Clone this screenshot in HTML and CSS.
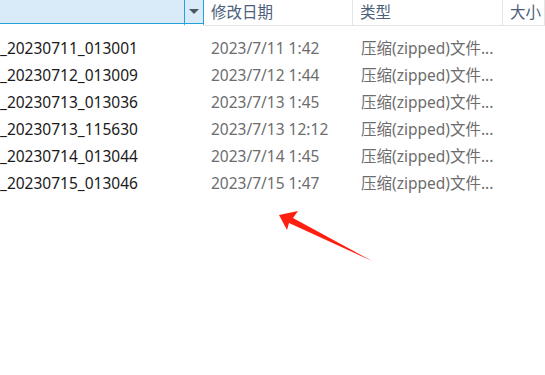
FILE: index.html
```html
<!DOCTYPE html>
<html lang="zh">
  <head>
    <meta charset="UTF-8" />
    <title>文件列表</title>
    <link rel="stylesheet" href="styles.css">
  </head>
  <body>
    <div class="explorer">
      <div class="header">
        <div class="col-name active"></div>
        <div class="col-drop active"><span class="caret"></span></div>
        <div class="col-date">修改日期</div>
        <div class="col-type">类型</div>
        <div class="col-size">大小</div>
      </div>
      <ul class="rows">
        <li class="row"><span class="name">_20230711_013001</span><span class="date">2023/7/11 1:42</span><span class="type">压缩(zipped)文件...</span></li>
        <li class="row"><span class="name">_20230712_013009</span><span class="date">2023/7/12 1:44</span><span class="type">压缩(zipped)文件...</span></li>
        <li class="row"><span class="name">_20230713_013036</span><span class="date">2023/7/13 1:45</span><span class="type">压缩(zipped)文件...</span></li>
        <li class="row"><span class="name">_20230713_115630</span><span class="date">2023/7/13 12:12</span><span class="type">压缩(zipped)文件...</span></li>
        <li class="row"><span class="name">_20230714_013044</span><span class="date">2023/7/14 1:45</span><span class="type">压缩(zipped)文件...</span></li>
        <li class="row"><span class="name">_20230715_013046</span><span class="date">2023/7/15 1:47</span><span class="type">压缩(zipped)文件...</span></li>
      </ul>
      <!-- 红色标注箭头 -->
      <svg class="arrow" width="545" height="375" viewBox="0 0 545 375">
        <polygon points="279,215 298,211 293,218 372,261 289,223 287,230" fill="#ff1f10" />
      </svg>
    </div>
  </body>
</html>
```

FILE: styles.css
```css
body {
  margin: 0;
  padding: 0;
  background: #fff;
  font-family: "Noto Sans", "Noto Sans CJK SC", sans-serif;
  font-size: 15.5px;
}
.explorer {
  position: relative;
  width: 545px;
  height: 375px;
  overflow: hidden;
}
.header {
  display: flex;
  height: 26px;
  color: #4c607a;
}
.header > div {
  box-sizing: border-box;
  height: 26px;
  line-height: 24px;
  padding-left: 7px;
  border-bottom: 1px solid #e5e5e5;
  border-right: 1px solid #e5e5e5;
  white-space: nowrap;
}
.header > div.active {
  background: #d9ebf9;
  border-right: 1px solid #26a0da;
  border-bottom: 2px solid #fff;
  box-shadow: inset 0 -1px 0 #26a0da;
  padding: 0;
}
.col-name {
  width: 185px;
}
.col-drop {
  width: 19px;
  display: flex;
  align-items: center;
  justify-content: center;
}
.caret {
  width: 0;
  height: 0;
  border-left: 5px solid transparent;
  border-right: 5px solid transparent;
  border-top: 5px solid #4d5560;
  margin-top: -2px;
}
.col-date {
  width: 149px;
}
.col-type {
  width: 150px;
}
.col-size {
  flex: 1;
}
.rows {
  list-style: none;
  margin: 0;
  padding: 9px 0 0 0;
}
.row {
  display: flex;
  height: 27px;
  line-height: 27px;
  white-space: nowrap;
}
.name {
  width: 211px;
  color: #1a1a1a;
}
.date {
  width: 150px;
  color: #6d6d6d;
}
.type {
  color: #6d6d6d;
}
.arrow {
  position: absolute;
  left: 0;
  top: 0;
}
```
